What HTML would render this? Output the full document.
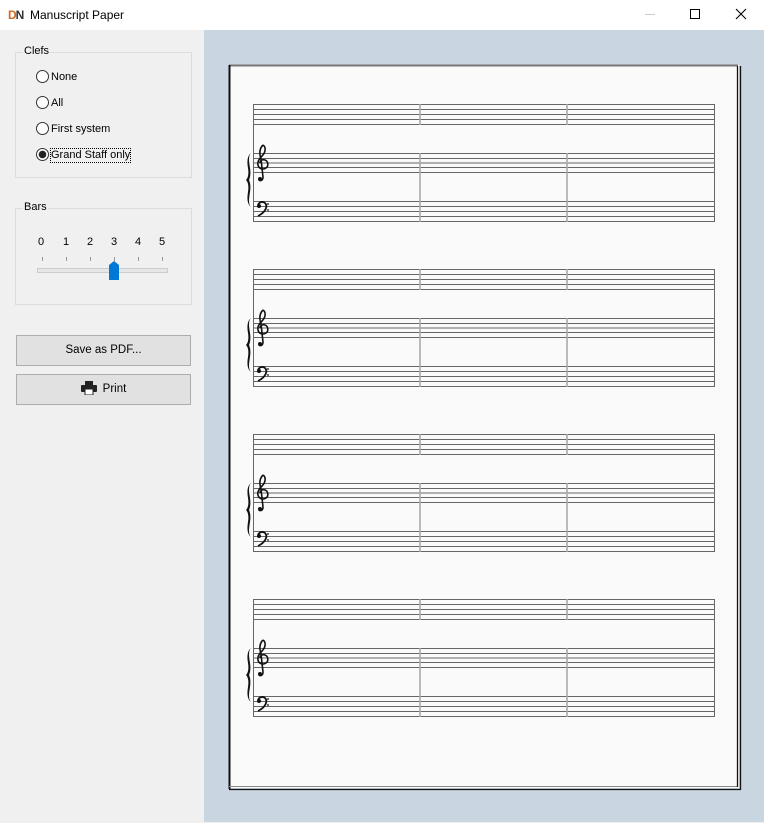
<!DOCTYPE html>
<html><head><meta charset="utf-8"><style>
*{margin:0;padding:0;box-sizing:border-box}
body{width:764px;height:823px;overflow:hidden;background:#f0f0f0;font-family:"Liberation Sans",sans-serif;font-size:12px;color:#000;position:relative}
.title{position:absolute;left:0;top:0;width:764px;height:30px;background:#fff}
.gb{position:absolute;border:1px solid #dcdcdc}
.gb .lg{position:absolute;left:7px;top:-8px;background:#f0f0f0;padding:0 1px;font-size:11px}
.rad{position:absolute;left:36px;font-size:11px;line-height:13px}
.rad i{position:absolute;left:0;top:0;width:13px;height:13px;border:1px solid #333;border-radius:50%;background:#fff}
.rad span{position:absolute;left:15px;top:1px;white-space:nowrap}
.btn{position:absolute;left:16px;width:175px;height:31px;background:#e1e1e1;border:1px solid #adadad;text-align:center;line-height:29px;font-size:11.5px}
.num{position:absolute;top:236px;font-size:11px}
</style></head><body>
<div class="title">
<span style="position:absolute;left:8px;top:8px;font-weight:bold;font-size:12px;letter-spacing:-1px"><span style="color:#d2691e">D</span><span style="color:#333">N</span></span>
<span style="position:absolute;left:30px;top:8px;font-size:12px">Manuscript Paper</span>
<div style="position:absolute;left:645px;top:14px;width:10px;height:1px;background:#ccc"></div>
<div style="position:absolute;left:690px;top:9px;width:10px;height:10px;border:1px solid #000"></div>
<svg style="position:absolute;left:735px;top:8px" width="12" height="12"><path d="M1 1L11 11M11 1L1 11" stroke="#000" stroke-width="1.1"/></svg>
</div>
<div class="gb" style="left:15px;top:52px;width:177px;height:126px"><span class="lg">Clefs</span></div>
<div class="rad" style="top:70px"><i></i><span>None</span></div>
<div class="rad" style="top:96px"><i></i><span>All</span></div>
<div class="rad" style="top:122px"><i></i><span>First system</span></div>
<div class="rad" style="top:148px"><i style="background:radial-gradient(circle,#222 3.5px,#fff 4px)"></i><span style="outline:1px dotted #000">Grand Staff only</span></div>
<div class="gb" style="left:15px;top:208px;width:177px;height:97px"><span class="lg">Bars</span></div>
<span class="num" style="left:38px">0</span><span class="num" style="left:63px">1</span><span class="num" style="left:87px">2</span><span class="num" style="left:111px">3</span><span class="num" style="left:135px">4</span><span class="num" style="left:159px">5</span>
<svg style="position:absolute;left:30px;top:255px" width="150" height="30">
<g stroke="#999"><path d="M12.5 2v4M36.5 2v4M60.5 2v4M84.5 2v4M108.5 2v4M132.5 2v4"/></g>
<rect x="7.5" y="13.5" width="130" height="4" fill="#e6e6e6" stroke="#ccc"/>
<path d="M79 10l5-4 5 4v15h-10z" fill="#0078d7"/>
</svg>
<div class="btn" style="top:335px">Save as PDF...</div>
<div class="btn" style="top:374px"><svg style="vertical-align:-3px;margin-right:6px" width="16" height="14"><rect x="4" y="0" width="8" height="4" fill="#222"/><rect x="0" y="4" width="16" height="7" rx="1" fill="#222"/><rect x="4" y="8" width="8" height="6" fill="#fff" stroke="#222"/></svg>Print</div>
<div style="position:absolute;left:204px;top:30px;width:560px;height:792px;background:#c9d5e0"></div>
<svg style="position:absolute;left:0;top:0" width="764" height="823">
<rect x="229" y="65" width="510" height="723" fill="#fafafa"/>
<path d="M229 65.5H738" stroke="#777" stroke-width="2"/>
<path d="M229.5 65V789" stroke="#111" stroke-width="2"/>
<path d="M229 786.5H738" stroke="#888" stroke-width="1"/>
<path d="M229 789.5H741M740.5 66V790M737.5 66V787" stroke="#111" stroke-width="1.3"/>
<defs>
<g id="sys">
<g stroke="#666" stroke-width="1">
<path d="M253 104.5H714M253 109.5H714M253 114.5H714M253 119.5H714M253 124.5H714"/>
<path d="M253 153.5H714M253 158.5H714M253 163H714M253 167.5H714M253 172.5H714"/>
<path d="M253 201.5H714M253 206.5H714M253 211.5H714M253 216.5H714M253 221.5H714"/>
<path d="M253.5 104V222M714.5 104V222"/>
</g>
<path d="M420 104V125M567 104V125M420 153V222M567 153V222" stroke="#aaa" stroke-width="1.6"/>
<path d="M251 153c-4 3-4 9-3 15 1 6 0 10-2 12 2 2 3 6 2 12-1 6-1 12 3 15c-3-3-2-9-1-15 1-6 0-10-1-12 1-2 2-6 1-12-1-6-2-12 1-15z" fill="#111"/>
<path d="M263 145c-3 3-4 8-2 14l2 18c0 4-3 4-4 3M263 145c3 2 3 7-1 11-3 3-5 6-4 9 1 4 5 5 8 3 3-2 2-7-1-8-3-1-5 1-5 3" stroke="#111" stroke-width="1.6" fill="none"/>
<circle cx="260" cy="179" r="2" fill="#111"/>
<path d="M258 205c1-3 5-4 7-2 3 3 1 9-7 13" stroke="#111" stroke-width="1.8" fill="none"/>
<circle cx="259" cy="206" r="2" fill="#111"/><circle cx="268" cy="204" r="0.9" fill="#111"/><circle cx="268" cy="210" r="0.9" fill="#111"/>
</g>
</defs>
<use href="#sys"/>
<use href="#sys" y="165"/>
<use href="#sys" y="330"/>
<use href="#sys" y="495"/>
</svg>
</body></html>
